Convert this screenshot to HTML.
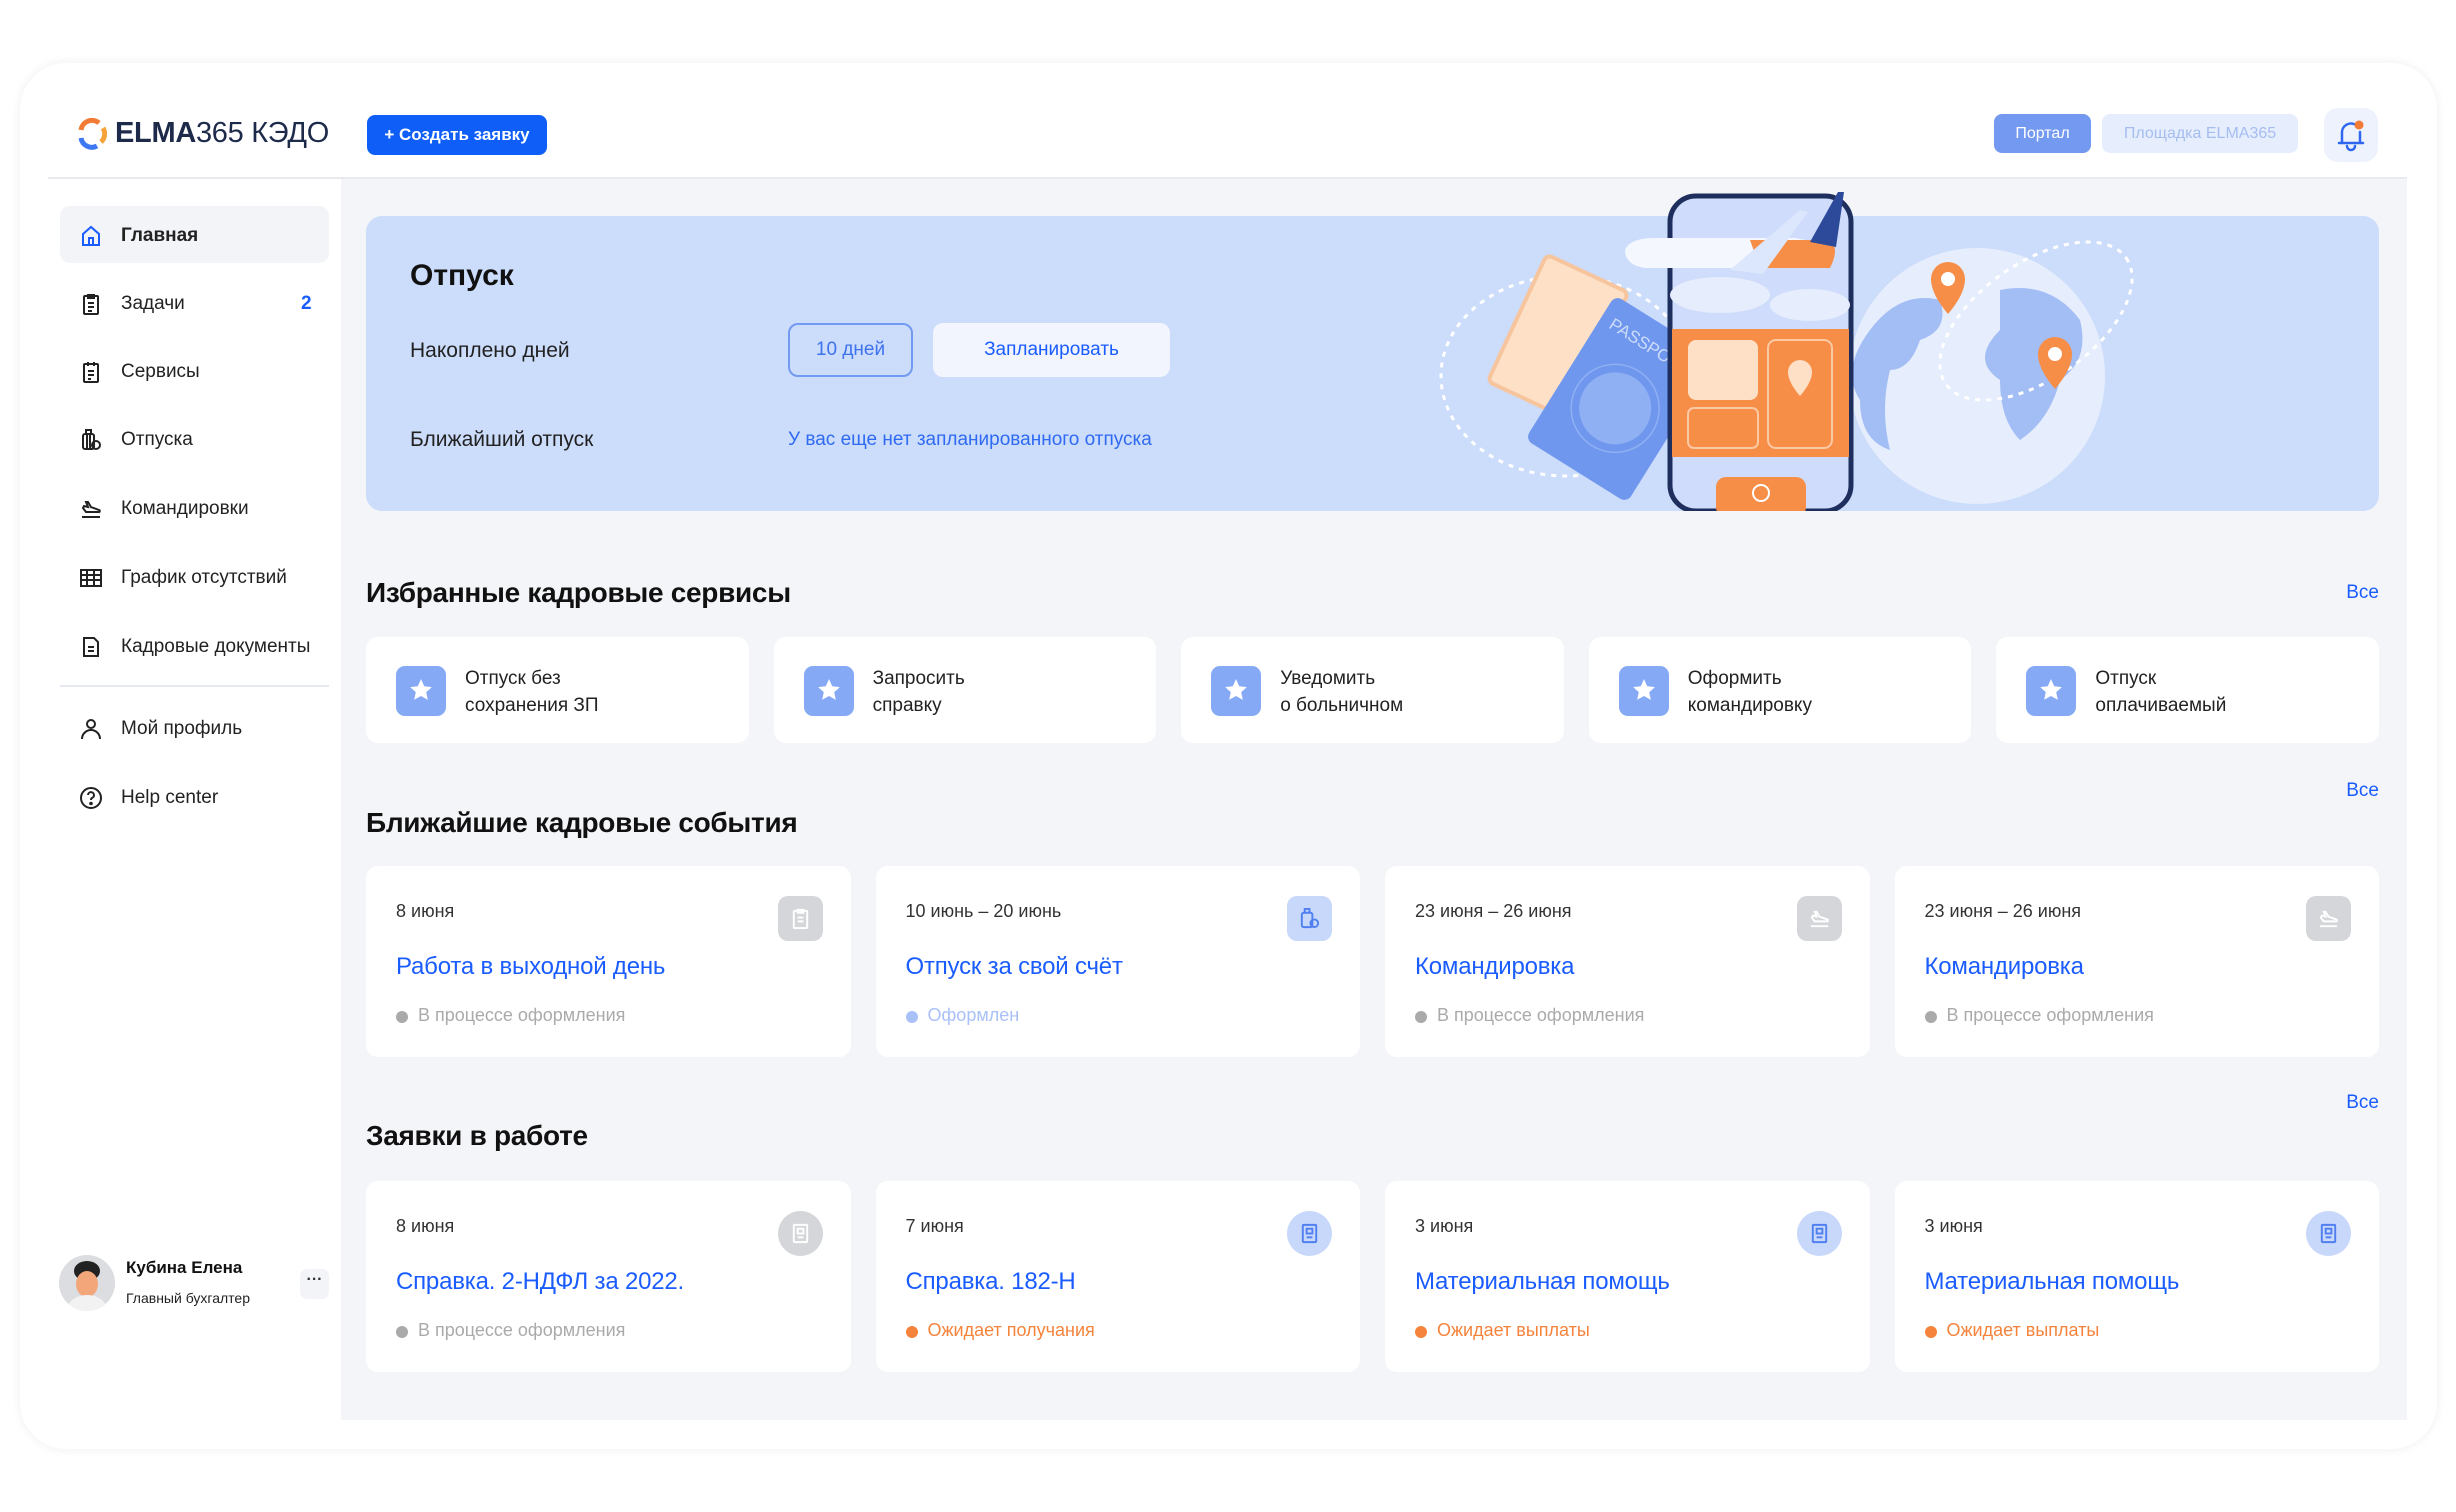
<!DOCTYPE html>
<html><head><meta charset="utf-8">
<style>
*{box-sizing:border-box;margin:0;padding:0}
body{width:2456px;height:1512px;background:#fff;font-family:"Liberation Sans","Noto Sans CJK SC",sans-serif;position:relative;overflow:hidden;color:#1b1b1f}
.abs{position:absolute}
.outer{left:20px;top:63px;width:2417px;height:1386px;border-radius:46px;background:#fff;box-shadow:0 0 10px rgba(0,0,0,.07)}
.main{left:341px;top:178px;width:2066px;height:1242px;background:#f4f5f8}
.hline{left:48px;top:177px;width:2359px;height:2px;background:#e9eaee}
.nav{left:60px;height:57px;width:269px;display:flex;align-items:center;font-size:19px;color:#222}
.nav svg{position:absolute;left:19px;width:24px;height:24px}
.nav span{position:absolute;left:61px}
.sec{left:366px;font-size:28px;font-weight:bold;color:#111;letter-spacing:-.3px}
.all{right:77px;font-size:19px;color:#1a5cff}
.row{left:366px;width:2013px;display:flex;gap:25px}
.sc{flex:1;height:106px;background:#fff;border-radius:12px;position:relative}
.sc .st{position:absolute;left:30px;top:29px;width:50px;height:50px;border-radius:9px;background:#86a9f6}
.sc .st svg{position:absolute;left:12px;top:11px}
.sc .tx{position:absolute;left:99px;top:28px;font-size:19px;line-height:27px;color:#222}
.ec{flex:1;height:191px;background:#fff;border-radius:12px;position:relative}
.ec .d{position:absolute;left:30px;top:35px;font-size:18px;color:#333}
.ec .t{position:absolute;left:30px;top:87px;font-size:24px;color:#1a5cff;letter-spacing:-.2px}
.ec .s{position:absolute;left:30px;top:139px;font-size:18px;color:#aaa;padding-left:22px}
.ec .s:before{content:"";position:absolute;left:0;top:6px;width:12px;height:12px;border-radius:50%;background:currentColor}
.ec .ic{position:absolute;right:28px;top:30px;width:45px;height:45px;border-radius:10px;background:#d4d6da}
.ec .ic.b{background:#c8d8fb}
.ec .ic.c{border-radius:50%}
.ec .ic svg{position:absolute;left:11px;top:11px}
</style></head><body>
<div class="abs outer"></div>
<div class="abs main"></div>
<div class="abs hline"></div>

<svg class="abs" style="left:77px;top:118px" width="30" height="32" viewBox="0 0 30 32">
<path d="M4 12 A11 11 0 0 1 22 5" stroke="#f27c36" stroke-width="5" fill="none"/>
<path d="M26 10 A11 11 0 0 1 24 24" stroke="#f5a33a" stroke-width="5" fill="none"/>
<path d="M20 28 A11 11 0 0 1 4 20" stroke="#3d78f2" stroke-width="5" fill="none"/>
</svg>
<div class="abs" style="left:115px;top:117px;font-size:29px;color:#1e2a4a;letter-spacing:-.3px"><b>ELMA</b>365 КЭДО</div>
<div class="abs" style="left:367px;top:115px;width:180px;height:40px;background:#0f5ef7;border-radius:8px;color:#fff;font-size:17px;font-weight:bold;display:flex;align-items:center;justify-content:center">+ Создать заявку</div>

<div class="abs" style="left:1994px;top:114px;width:97px;height:39px;background:#7499f0;border-radius:8px;color:#fff;font-size:16px;display:flex;align-items:center;justify-content:center">Портал</div>
<div class="abs" style="left:2102px;top:114px;width:196px;height:39px;background:#e6eefd;border-radius:8px;color:#a6bdf0;font-size:16px;display:flex;align-items:center;justify-content:center">Площадка ELMA365</div>
<div class="abs" style="left:2324px;top:108px;width:54px;height:54px;background:#eef2fd;border-radius:14px"></div>
<svg class="abs" style="left:2336px;top:118px" width="30" height="34" viewBox="0 0 30 34"><path d="M6 24 V15 A9 9 0 0 1 20 7 M24 14 V24 M3 25 H27 M11 28 A4 4 0 0 0 19 28" stroke="#2e66f0" stroke-width="2.5" fill="none" stroke-linecap="round"/><circle cx="23" cy="7" r="4.5" fill="#f27c36"/></svg>

<div class="abs" style="left:60px;top:206px;width:269px;height:57px;background:#f3f4f7;border-radius:10px"></div>
<div class="abs nav" style="top:207px"><svg viewBox="0 0 24 24" fill="none" stroke="#1a5cff" stroke-width="2"><path d="M4 10 L12 3 L20 10 V21 H4 Z M10 21 V14 H14 V21"/></svg><span style="font-weight:bold;color:#222">Главная</span></div>
<div class="abs nav" style="top:275px"><svg viewBox="0 0 24 24" fill="none" stroke="#222" stroke-width="2"><rect x="5" y="4" width="14" height="18" rx="1"/><path d="M9 3h6v3H9zM9 11h6M9 15h6M9 19h4"/></svg><span>Задачи</span><span style="left:241px;color:#1a5cff;font-weight:bold">2</span></div>
<div class="abs nav" style="top:343px"><svg viewBox="0 0 24 24" fill="none" stroke="#222" stroke-width="2"><rect x="5" y="4" width="14" height="18" rx="1"/><path d="M9 2v4M15 2v4M9 11h6M9 15h6M9 19h3"/></svg><span>Сервисы</span></div>
<div class="abs nav" style="top:411px"><svg viewBox="0 0 24 24" fill="none" stroke="#222" stroke-width="2"><rect x="4" y="6" width="11" height="15" rx="2"/><path d="M7 6V2h5v4M8 6v15M11 6v15"/><circle cx="17" cy="17" r="4"/></svg><span>Отпуска</span></div>
<div class="abs nav" style="top:480px"><svg viewBox="0 0 24 24" fill="none" stroke="#222" stroke-width="2"><path d="M3 20h18M4 11l3 4h13c1 0 1-2 0-2l-8-3-3-5H7l2 5-4-1z"/></svg><span>Командировки</span></div>
<div class="abs nav" style="top:549px"><svg viewBox="0 0 24 24" fill="none" stroke="#222" stroke-width="2"><rect x="2" y="4" width="20" height="16"/><path d="M2 9h20M2 14h20M8 4v16M15 4v16"/></svg><span>График отсутствий</span></div>
<div class="abs nav" style="top:618px"><svg viewBox="0 0 24 24" fill="none" stroke="#222" stroke-width="2"><path d="M5 3h10l4 4v14H5z"/><path d="M9 12h6M9 16h6"/></svg><span>Кадровые документы</span></div>
<div class="abs" style="left:60px;top:685px;width:269px;height:2px;background:#e6e9f2"></div>
<div class="abs nav" style="top:700px"><svg viewBox="0 0 24 24" fill="none" stroke="#222" stroke-width="2"><circle cx="12" cy="7" r="4"/><path d="M3 22a9 9 0 0 1 18 0"/></svg><span>Мой профиль</span></div>
<div class="abs nav" style="top:769px"><svg viewBox="0 0 24 24" fill="none" stroke="#222" stroke-width="2"><circle cx="12" cy="12" r="10"/><path d="M9 9a3 3 0 1 1 4 3c-1 .5-1 1-1 2"/><circle cx="12" cy="17.5" r=".8" fill="#222"/></svg><span>Help center</span></div>

<div class="abs" style="left:59px;top:1255px;width:56px;height:56px;border-radius:50%;background:#dcdde0;overflow:hidden">
<div class="abs" style="left:15px;top:6px;width:26px;height:20px;border-radius:50%;background:#222"></div>
<div class="abs" style="left:17px;top:16px;width:22px;height:26px;border-radius:50%;background:#f2a67a"></div>
<div class="abs" style="left:8px;top:40px;width:40px;height:30px;border-radius:50%;background:#f2f2f2"></div>
</div>
<div class="abs" style="left:126px;top:1258px;font-size:17px;font-weight:bold;color:#111">Кубина Елена</div>
<div class="abs" style="left:126px;top:1290px;font-size:14px;color:#222">Главный бухгалтер</div>
<div class="abs" style="left:300px;top:1269px;width:29px;height:30px;border-radius:7px;background:#f3f4f7;font-size:16px;text-align:center;line-height:22px;font-weight:bold;color:#333">···</div>

<div class="abs" style="left:366px;top:216px;width:2013px;height:295px;background:#ccdcfb;border-radius:16px"></div>
<div class="abs" style="left:410px;top:259px;font-size:30px;font-weight:bold;color:#111">Отпуск</div>
<div class="abs" style="left:410px;top:339px;font-size:21px;color:#222">Накоплено дней</div>
<div class="abs" style="left:788px;top:323px;width:125px;height:54px;border:2px solid #7499f0;border-radius:10px;color:#3f72ef;font-size:19px;display:flex;align-items:center;justify-content:center">10 дней</div>
<div class="abs" style="left:933px;top:323px;width:237px;height:54px;background:#f2f5fd;border-radius:10px;color:#1a5cff;font-size:19px;display:flex;align-items:center;justify-content:center">Запланировать</div>
<div class="abs" style="left:410px;top:428px;font-size:21px;color:#222">Ближайший отпуск</div>
<div class="abs" style="left:788px;top:429px;font-size:19px;color:#2f6af2">У вас еще нет запланированного отпуска</div>

<svg class="abs" style="left:1400px;top:180px" width="800" height="340" viewBox="0 0 800 340">
<defs><clipPath id="cb"><rect x="0" y="0" width="800" height="331"/></clipPath></defs>
<g clip-path="url(#cb)">
<ellipse cx="166" cy="196" rx="125" ry="100" fill="none" stroke="#fff" stroke-width="3" stroke-dasharray="5 6"/>
<circle cx="577" cy="196" r="128" fill="#e6eefd"/>
<path d="M470 150 q30-40 70-30 q10 30-20 40 q-10 30-30 30 q-10 40 0 80 q-30-10-30-50 q-20-30 10-70z" fill="#a3bdf5"/>
<path d="M600 110 q50-10 80 30 q10 40-20 60 q-10 40-40 60 q-20-20-20-60 q-30-20 0-50z" fill="#a3bdf5"/>
<ellipse cx="636" cy="141" rx="110" ry="58" transform="rotate(-35 636 141)" fill="none" stroke="#fff" stroke-width="3" stroke-dasharray="5 6"/>
<g transform="rotate(25 158 157)"><rect x="113" y="87" width="90" height="140" rx="6" fill="#fde0c6"/><rect x="113" y="87" width="90" height="140" rx="6" fill="none" stroke="#f6c59d" stroke-width="4"/></g>
<g transform="rotate(32 221 219)"><rect x="161" y="134" width="120" height="170" rx="8" fill="#6f97ee"/><circle cx="221" cy="230" r="36" fill="#8fb0f3"/><circle cx="221" cy="230" r="44" fill="none" stroke="#8fb0f3" stroke-width="1.5"/><text x="172" y="165" font-size="17" fill="#cddcfb" font-family="Liberation Sans">PASSPORT</text></g>
<rect x="270" y="16" width="181" height="315" rx="26" fill="#cfdcfb" stroke="#1e2f5e" stroke-width="5"/>
<ellipse cx="320" cy="115" rx="50" ry="18" fill="#e6eefd"/><ellipse cx="410" cy="125" rx="40" ry="16" fill="#e6eefd"/>
<rect x="272" y="149" width="177" height="128" fill="#f78e48"/>
<rect x="288" y="160" width="70" height="60" rx="8" fill="#fde0c6"/>
<rect x="368" y="160" width="64" height="108" rx="8" fill="none" stroke="#fbc9a3" stroke-width="2"/>
<path d="M388 192 a12 12 0 1 1 24 0 q0 10 -12 24 q-12-14-12-24z" fill="#fde0c6"/>
<rect x="288" y="228" width="70" height="40" rx="6" fill="none" stroke="#fbc9a3" stroke-width="2"/>
<rect x="316" y="297" width="90" height="40" rx="10" fill="#f78e48"/>
<circle cx="361" cy="313" r="8" fill="none" stroke="#fff" stroke-width="2"/>
<path d="M225 70 q5-12 30-12 l140 0 q30 5 40 15 q-10 12-40 15 l-150 0 q-20-3-20-18z" fill="#f4f7fe"/>
<path d="M350 60 l80 0 q10 8 0 28 l-70 0z" fill="#f78e48"/>
<path d="M410 62 l28-50 l6 0 l-8 55z" fill="#2d4a9a"/>
<path d="M330 90 l70-60 l8 2 l-45 62z" fill="#dce6fc"/>
<path d="M531 99 a17 17 0 1 1 34 0 q0 15 -17 35 q-17-20-17-35z" fill="#f78e48"/><circle cx="548" cy="99" r="7" fill="#fff"/>
<path d="M638 174 a17 17 0 1 1 34 0 q0 15 -17 35 q-17-20-17-35z" fill="#f78e48"/><circle cx="655" cy="174" r="7" fill="#fff"/>
</g>
</svg>

<div class="abs sec" style="top:577px">Избранные кадровые сервисы</div>
<div class="abs all" style="top:582px">Все</div>
<div class="abs row" style="top:637px">
<div class="sc"><div class="st"><svg width="26" height="26" viewBox="0 0 24 24"><path d="M12 2l3 6.5 7 .8-5.2 4.8 1.5 7L12 17.5 5.7 21l1.5-7L2 9.3l7-.8z" fill="#fff"/></svg></div><div class="tx">Отпуск без<br>сохранения ЗП</div></div>
<div class="sc"><div class="st"><svg width="26" height="26" viewBox="0 0 24 24"><path d="M12 2l3 6.5 7 .8-5.2 4.8 1.5 7L12 17.5 5.7 21l1.5-7L2 9.3l7-.8z" fill="#fff"/></svg></div><div class="tx">Запросить<br>справку</div></div>
<div class="sc"><div class="st"><svg width="26" height="26" viewBox="0 0 24 24"><path d="M12 2l3 6.5 7 .8-5.2 4.8 1.5 7L12 17.5 5.7 21l1.5-7L2 9.3l7-.8z" fill="#fff"/></svg></div><div class="tx">Уведомить<br>о больничном</div></div>
<div class="sc"><div class="st"><svg width="26" height="26" viewBox="0 0 24 24"><path d="M12 2l3 6.5 7 .8-5.2 4.8 1.5 7L12 17.5 5.7 21l1.5-7L2 9.3l7-.8z" fill="#fff"/></svg></div><div class="tx">Оформить<br>командировку</div></div>
<div class="sc"><div class="st"><svg width="26" height="26" viewBox="0 0 24 24"><path d="M12 2l3 6.5 7 .8-5.2 4.8 1.5 7L12 17.5 5.7 21l1.5-7L2 9.3l7-.8z" fill="#fff"/></svg></div><div class="tx">Отпуск<br>оплачиваемый</div></div>
</div>

<div class="abs sec" style="top:807px">Ближайшие кадровые события</div>
<div class="abs all" style="top:780px">Все</div>
<div class="abs row" style="top:866px">
<div class="ec"><div class="d">8 июня</div><div class="t">Работа в выходной день</div><div class="s">В процессе оформления</div><div class="ic"><svg width="23" height="23" viewBox="0 0 24 24" fill="none" stroke="#fff" stroke-width="2"><rect x="5" y="4" width="14" height="18" rx="1"/><path d="M9 3h6v3H9zM9 11h6M9 15h6"/></svg></div></div>
<div class="ec"><div class="d">10 июнь – 20 июнь</div><div class="t">Отпуск за свой счёт</div><div class="s" style="color:#a9c0f8">Оформлен</div><div class="ic b"><svg width="23" height="23" viewBox="0 0 24 24" fill="none" stroke="#4f7ff0" stroke-width="2"><rect x="4" y="6" width="11" height="15" rx="2"/><path d="M7 6V2h5v4"/><circle cx="17" cy="17" r="4"/></svg></div></div>
<div class="ec"><div class="d">23 июня – 26 июня</div><div class="t">Командировка</div><div class="s">В процессе оформления</div><div class="ic"><svg width="23" height="23" viewBox="0 0 24 24" fill="none" stroke="#fff" stroke-width="2"><path d="M3 20h18M4 11l3 4h13c1 0 1-2 0-2l-8-3-3-5H7l2 5-4-1z"/></svg></div></div>
<div class="ec"><div class="d">23 июня – 26 июня</div><div class="t">Командировка</div><div class="s">В процессе оформления</div><div class="ic"><svg width="23" height="23" viewBox="0 0 24 24" fill="none" stroke="#fff" stroke-width="2"><path d="M3 20h18M4 11l3 4h13c1 0 1-2 0-2l-8-3-3-5H7l2 5-4-1z"/></svg></div></div>
</div>

<div class="abs sec" style="top:1120px">Заявки в работе</div>
<div class="abs all" style="top:1092px">Все</div>
<div class="abs row" style="top:1181px">
<div class="ec"><div class="d">8 июня</div><div class="t">Справка. 2-НДФЛ за 2022.</div><div class="s">В процессе оформления</div><div class="ic c"><svg width="23" height="23" viewBox="0 0 24 24" fill="none" stroke="#fff" stroke-width="2"><rect x="5" y="3" width="14" height="18" rx="1"/><rect x="9" y="7" width="6" height="5"/><path d="M9 16h6"/></svg></div></div>
<div class="ec"><div class="d">7 июня</div><div class="t">Справка. 182-Н</div><div class="s" style="color:#f5833c">Ожидает получания</div><div class="ic b c"><svg width="23" height="23" viewBox="0 0 24 24" fill="none" stroke="#4f7ff0" stroke-width="2"><rect x="5" y="3" width="14" height="18" rx="1"/><rect x="9" y="7" width="6" height="5"/><path d="M9 16h6"/></svg></div></div>
<div class="ec"><div class="d">3 июня</div><div class="t">Материальная помощь</div><div class="s" style="color:#f5833c">Ожидает выплаты</div><div class="ic b c"><svg width="23" height="23" viewBox="0 0 24 24" fill="none" stroke="#4f7ff0" stroke-width="2"><rect x="5" y="3" width="14" height="18" rx="1"/><rect x="9" y="7" width="6" height="5"/><path d="M9 16h6"/></svg></div></div>
<div class="ec"><div class="d">3 июня</div><div class="t">Материальная помощь</div><div class="s" style="color:#f5833c">Ожидает выплаты</div><div class="ic b c"><svg width="23" height="23" viewBox="0 0 24 24" fill="none" stroke="#4f7ff0" stroke-width="2"><rect x="5" y="3" width="14" height="18" rx="1"/><rect x="9" y="7" width="6" height="5"/><path d="M9 16h6"/></svg></div></div>
</div>
</body></html>
